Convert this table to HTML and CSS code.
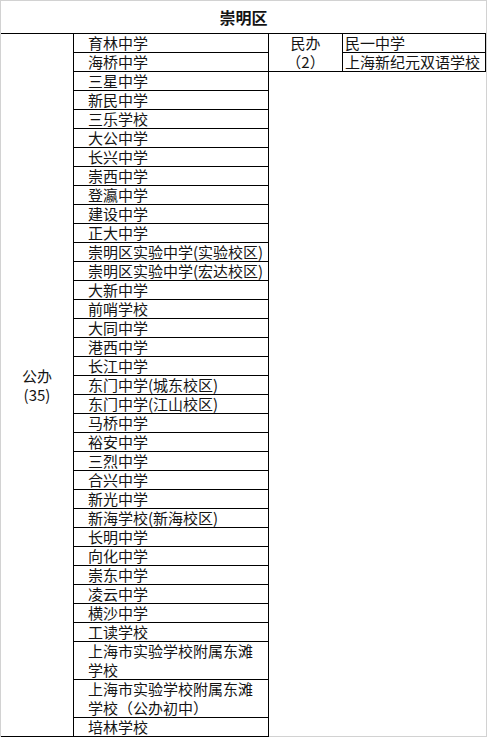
FILE: index.html
```html
<!DOCTYPE html>
<html lang="zh">
<head>
<meta charset="utf-8">
<title>崇明区</title>
<link rel="stylesheet" href="styles.css">
</head>
<body>
<div class="sheet">
  <div class="title">崇明区</div>
  <div class="body">
    <div class="pub">公办<br>(35)</div>
    <div class="list">
      <div class="row">育林中学</div>
      <div class="row">海桥中学</div>
      <div class="row">三星中学</div>
      <div class="row">新民中学</div>
      <div class="row">三乐学校</div>
      <div class="row">大公中学</div>
      <div class="row">长兴中学</div>
      <div class="row">崇西中学</div>
      <div class="row">登瀛中学</div>
      <div class="row">建设中学</div>
      <div class="row">正大中学</div>
      <div class="row">崇明区实验中学(实验校区)</div>
      <div class="row">崇明区实验中学(宏达校区)</div>
      <div class="row">大新中学</div>
      <div class="row">前哨学校</div>
      <div class="row">大同中学</div>
      <div class="row">港西中学</div>
      <div class="row">长江中学</div>
      <div class="row">东门中学(城东校区)</div>
      <div class="row">东门中学(江山校区)</div>
      <div class="row">马桥中学</div>
      <div class="row">裕安中学</div>
      <div class="row">三烈中学</div>
      <div class="row">合兴中学</div>
      <div class="row">新光中学</div>
      <div class="row">新海学校(新海校区)</div>
      <div class="row">长明中学</div>
      <div class="row">向化中学</div>
      <div class="row">崇东中学</div>
      <div class="row">凌云中学</div>
      <div class="row">横沙中学</div>
      <div class="row">工读学校</div>
      <div class="row two">上海市实验学校附属东滩<br>学校</div>
      <div class="row two">上海市实验学校附属东滩<br>学校（公办初中）</div>
      <div class="row last">培林学校</div>
    </div>
    <div class="priv">
      <div class="priv-top">
        <div class="kind">民办<br>（2）</div>
        <div class="plist">
          <div class="prow">民一中学</div>
          <div class="prow">上海新纪元双语学校</div>
        </div>
      </div>
      <div class="priv-rest"></div>
    </div>
  </div>
</div>
</body>
</html>
```

FILE: styles.css
```css
html, body {
  margin: 0;
  padding: 0;
  background: #ffffff;
  overflow: hidden;
}

.sheet {
  box-sizing: border-box;
  width: 487px;
  height: 737px;
  border-top: 1px solid #d2d2d2;
  border-left: 1px solid #d2d2d2;
  border-right: 1px solid #d2d2d2;
  font-family: "Noto Sans CJK SC", "Noto Sans", sans-serif;
  font-size: 15px;
  color: #141414;
  display: flex;
  flex-direction: column;
}

.title {
  box-sizing: border-box;
  height: 33px;
  border-bottom: 1px solid #000;
  display: flex;
  align-items: center;
  justify-content: center;
  font-size: 16px;
  font-weight: bold;
}

.body {
  display: flex;
  height: 703px;
}

.pub {
  box-sizing: border-box;
  width: 73px;
  border-right: 1px solid #000;
  border-bottom: 1px solid #000;
  display: flex;
  align-items: center;
  justify-content: center;
  text-align: center;
  line-height: 19px;
}

.list {
  width: 195px;
  display: flex;
  flex-direction: column;
}

.row {
  box-sizing: border-box;
  height: 19px;
  padding-left: 14px;
  border-right: 1px solid #000;
  border-bottom: 1px solid #000;
  line-height: 18px;
  white-space: nowrap;
}

.row.two {
  height: 38px;
  line-height: 18.5px;
}

.priv {
  width: 217px;
  display: flex;
  flex-direction: column;
}

.priv-top {
  display: flex;
  height: 38px;
}

.kind {
  box-sizing: border-box;
  width: 74px;
  border-right: 1px solid #000;
  border-bottom: 1px solid #000;
  text-align: center;
  line-height: 18.5px;
}

.plist {
  width: 143px;
  display: flex;
  flex-direction: column;
}

.prow {
  box-sizing: border-box;
  height: 19px;
  padding-left: 2px;
  border-right: 1px solid #000;
  border-bottom: 1px solid #000;
  line-height: 18px;
  white-space: nowrap;
}

.priv-rest {
  flex: 1;
  border-bottom: 1px solid #d2d2d2;
}
```
